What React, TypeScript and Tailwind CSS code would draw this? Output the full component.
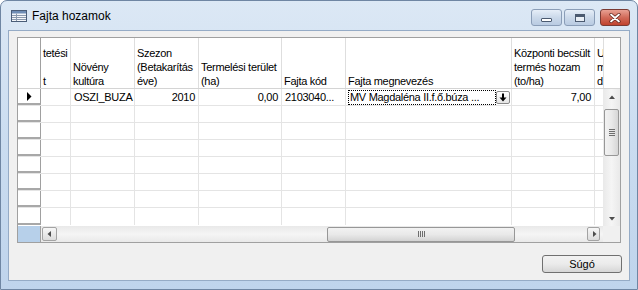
import { ReactNode } from 'react'

const COLS = [30, 64, 64, 83, 64, 166, 83]

const HEADERS: string[][] = [
  ['tetési', '\u00a0', 't'],
  ['Növény', 'kultúra'],
  ['Szezon', '(Betakarítás', 'éve)'],
  ['Termelési terület', '(ha)'],
  ['Fajta kód'],
  ['Fajta megnevezés'],
  ['Központi becsült', 'termés hozam', '(to/ha)'],
]

function TableIcon() {
  return (
    <svg width="16" height="12" viewBox="0 0 16 12" className="shrink-0">
      <rect x="0.5" y="0.5" width="15" height="11" fill="#f4f6f9" stroke="#4a5d78" />
      <rect x="1" y="1" width="14" height="2.5" fill="#6f8db5" />
      <line x1="1" y1="5.5" x2="15" y2="5.5" stroke="#8a99ad" />
      <line x1="1" y1="7.5" x2="15" y2="7.5" stroke="#8a99ad" />
      <line x1="1" y1="9.5" x2="15" y2="9.5" stroke="#8a99ad" />
      <line x1="5.5" y1="3.5" x2="5.5" y2="11" stroke="#8a99ad" />
    </svg>
  )
}

function CaptionButton({ kind }: { kind: 'min' | 'max' | 'close' }) {
  if (kind === 'close') {
    return (
      <div className="w-[30px] h-[17px] rounded-[3px] border border-[#7a3a33] bg-gradient-to-b from-[#e8a093] via-[#d16a59] to-[#c0412d] flex items-center justify-center">
        <svg width="12" height="10" viewBox="0 0 12 10">
          <path d="M2 1.5 L10 8.5 M10 1.5 L2 8.5" stroke="#5a1e17" strokeWidth="3.2" strokeLinecap="round" />
          <path d="M2 1.5 L10 8.5 M10 1.5 L2 8.5" stroke="#ffffff" strokeWidth="1.8" strokeLinecap="round" />
        </svg>
      </div>
    )
  }
  return (
    <div className="w-[31px] h-[17px] rounded-[3px] border border-[#8a9db7] bg-gradient-to-b from-[#e6eef8] via-[#cbd9ea] to-[#b9cbe2] flex items-center justify-center">
      {kind === 'min' ? (
        <div className="w-[11px] h-[4px] mt-[4px] bg-white border border-[#4b5a70] rounded-[1px]" />
      ) : (
        <div className="w-[10px] h-[8px] bg-white/60 border border-[#4b5a70] flex items-start">
          <div className="w-full h-[2px] bg-[#4b5a70]" />
        </div>
      )}
    </div>
  )
}

function HeaderCell({ width, lines }: { width: number; lines: string[] }) {
  return (
    <div
      className="h-full flex flex-col justify-end overflow-hidden whitespace-nowrap pl-[2px] border-r border-[#dedede]"
      style={{ width }}
    >
      {lines.map((l, i) => (
        <div key={i} className="leading-[14px]">{l}</div>
      ))}
    </div>
  )
}

function Cell({ width, children, align = 'left' }: { width: number; children?: ReactNode; align?: 'left' | 'right' }) {
  return (
    <div
      className={`h-full border-r border-[#e4e4e4] flex items-center overflow-hidden whitespace-nowrap ${align === 'right' ? 'justify-end pr-[3px]' : 'pl-[3px]'}`}
      style={{ width }}
    >
      {children}
    </div>
  )
}

function DownArrowButton() {
  return (
    <div className="w-[14px] h-[13px] rounded-[2px] border border-[#8a8a8a] bg-gradient-to-b from-white to-[#e6e6e6] flex items-center justify-center">
      <svg width="8" height="9" viewBox="0 0 8 9">
        <path d="M4 0.5 V6" stroke="#000" strokeWidth="2" />
        <path d="M0.5 4.5 L4 8.5 L7.5 4.5 Z" fill="#000" />
      </svg>
    </div>
  )
}

function Tri({ dir }: { dir: 'up' | 'down' | 'left' | 'right' }) {
  const d = {
    up: 'M1 5 L4 1.5 L7 5 Z',
    down: 'M1 3 L4 6.5 L7 3 Z',
    left: 'M5 1 L1.5 4 L5 7 Z',
    right: 'M3 1 L6.5 4 L3 7 Z',
  }[dir]
  return (
    <svg width="8" height="8" viewBox="0 0 8 8">
      <path d={d} fill="#4d4d4d" />
    </svg>
  )
}

function VScrollbar() {
  return (
    <div className="w-[17px] h-full bg-gradient-to-r from-[#e9e9e9] via-[#f5f5f5] to-[#e9e9e9] flex flex-col items-center">
      <div className="h-[17px] flex items-center justify-center"><Tri dir="up" /></div>
      <div className="mt-[3px] w-[15px] h-[47px] rounded-[2px] border border-[#979797] bg-gradient-to-r from-[#f2f2f2] via-[#e9e9e9] to-[#d6d6d6] flex flex-col items-center justify-center gap-[1px]">
        <div className="w-[6px] h-[1px] bg-[#6e6e6e]" />
        <div className="w-[6px] h-[1px] bg-[#6e6e6e]" />
        <div className="w-[6px] h-[1px] bg-[#6e6e6e]" />
        <div className="w-[6px] h-[1px] bg-[#6e6e6e]" />
      </div>
      <div className="flex-1" />
      <div className="h-[17px] flex items-center justify-center"><Tri dir="down" /></div>
    </div>
  )
}

function HScrollbar() {
  return (
    <div className="flex-1 h-full bg-gradient-to-b from-[#e9e9e9] via-[#f5f5f5] to-[#e9e9e9] flex items-center">
      <div className="ml-[1px] w-[15px] h-[14px] rounded-[2px] border border-[#a3a3a3] bg-gradient-to-b from-[#f7f7f7] to-[#dcdcdc] flex items-center justify-center">
        <Tri dir="left" />
      </div>
      <div className="w-[270px]" />
      <div className="w-[188px] h-[15px] rounded-[2px] border border-[#979797] bg-gradient-to-b from-[#f2f2f2] via-[#e9e9e9] to-[#d3d3d3] flex items-center justify-center gap-[1px]">
        <div className="w-[1px] h-[6px] bg-[#6e6e6e]" />
        <div className="w-[1px] h-[6px] bg-[#6e6e6e]" />
        <div className="w-[1px] h-[6px] bg-[#6e6e6e]" />
        <div className="w-[1px] h-[6px] bg-[#6e6e6e]" />
      </div>
      <div className="flex-1" />
      <div className="mr-[3px] w-[13px] h-[14px] rounded-[2px] border border-[#a3a3a3] bg-gradient-to-b from-[#f7f7f7] to-[#dcdcdc] flex items-center justify-center">
        <Tri dir="right" />
      </div>
    </div>
  )
}

export default function App() {
  const emptyRows = Array.from({ length: 7 })

  return (
    <div className="w-[638px] h-[290px] bg-white font-['Liberation_Sans',Arial,sans-serif] text-black">
      <div className="w-full h-full rounded-t-[7px] border border-[#6f86a3] bg-gradient-to-b from-[#dce8f5] via-[#cadcf0] to-[#bfd4ec] flex flex-col">
        {/* Title bar */}
        <div className="h-[29px] flex items-center pl-[10px] pr-[7px] shrink-0">
          <TableIcon />
          <span className="ml-[5px] text-[12px] leading-none pt-[1px]">Fajta hozamok</span>
          <div className="flex-1" />
          <div className="flex items-center gap-[2px] self-start mt-[8px]">
            <CaptionButton kind="min" />
            <CaptionButton kind="max" />
            <div className="w-[1px]" />
            <CaptionButton kind="close" />
          </div>
        </div>

        {/* Client area */}
        <div className="mx-[7px] h-[251px] border border-[#95abc6] bg-[#f0f0f0] flex flex-col text-[11px] tracking-[-0.3px]">
          {/* Grid */}
          <div className="mt-[6px] ml-[8px] w-[604px] h-[206px] border border-[#a0a0a0] bg-white flex flex-col">
            {/* Header */}
            <div className="h-[51px] flex border-b border-[#d4d4d4] shrink-0">
              <div className="w-[23px] h-full border-r border-[#a0a0a0]" />
              {COLS.map((w, i) => (
                <HeaderCell key={i} width={w} lines={HEADERS[i]} />
              ))}
              <div className="w-[9px] h-full overflow-hidden flex flex-col justify-end pl-[2px] border-r border-[#dedede]">
                <div className="leading-[14px]">U</div>
                <div className="leading-[14px]">m</div>
                <div className="leading-[14px]">d</div>
              </div>
              <div className="flex-1" />
            </div>

            {/* Body */}
            <div className="h-[137px] flex shrink-0">
              <div className="flex-1 flex flex-col overflow-hidden">
                {/* Data row */}
                <div className="h-[17px] flex border-b border-[#e4e4e4]">
                  <div className="w-[23px] h-full border-r border-[#a0a0a0] border-b-2 border-b-[#a8a8a8] flex items-center justify-center">
                    <svg width="6" height="9" viewBox="0 0 6 9">
                      <path d="M1 0 L5.5 4.5 L1 9 Z" fill="#000" />
                    </svg>
                  </div>
                  <Cell width={COLS[0]} />
                  <Cell width={COLS[1]}>OSZI_BUZA</Cell>
                  <Cell width={COLS[2]} align="right">2010</Cell>
                  <Cell width={COLS[3]} align="right">0,00</Cell>
                  <Cell width={COLS[4]}>2103040...</Cell>
                  <div className="h-full border-r border-[#e4e4e4] flex items-center pl-[2px]" style={{ width: COLS[5] }}>
                    <div className="w-[148px] h-[15px] border border-dotted border-black flex items-center pl-[1px] whitespace-nowrap overflow-hidden">
                      MV Magdaléna II.f.ő.búza ...
                    </div>
                    <DownArrowButton />
                  </div>
                  <Cell width={COLS[6]} align="right">7,00</Cell>
                  <div className="flex-1" />
                </div>
                {emptyRows.map((_, r) => (
                  <div key={r} className="h-[17px] flex border-b border-[#e4e4e4] last:border-b-0">
                    <div className="w-[23px] h-full border-r border-[#a0a0a0] border-b-2 border-b-[#a8a8a8]" />
                    {COLS.map((w, i) => (
                      <Cell key={i} width={w} />
                    ))}
                    <div className="flex-1" />
                  </div>
                ))}
              </div>
              <VScrollbar />
            </div>

            {/* Bottom: corner + horizontal scrollbar */}
            <div className="flex-1 flex">
              <div className="w-[23px] h-full bg-[#b7d0ea] border-r border-[#a0a0a0]" />
              <HScrollbar />
              <div className="w-[17px] h-full bg-[#f0f0f0]" />
            </div>
          </div>

          {/* Footer */}
          <div className="flex justify-end pr-[7px] mt-[12px]">
            <button className="w-[80px] h-[18px] rounded-[3px] border border-[#707070] bg-gradient-to-b from-[#f2f2f2] via-[#ebebeb] to-[#d6d6d6] text-[11px] leading-none tracking-normal flex items-center justify-center">
              Súgó
            </button>
          </div>
        </div>
      </div>
    </div>
  )
}
